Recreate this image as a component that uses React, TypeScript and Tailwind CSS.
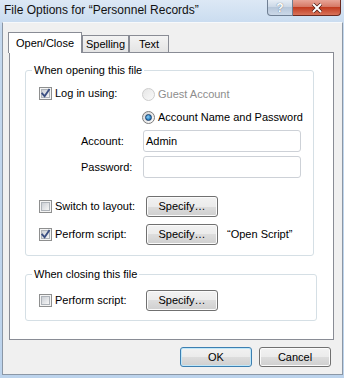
import React from "react";

const font = { fontFamily: '"Liberation Sans", Arial, sans-serif' };

function CheckBox({ checked }: { checked?: boolean }) {
  return (
    <span className="relative flex h-[13px] w-[13px] shrink-0 items-center justify-center border border-[#8e8f8f] bg-[#f4f4f4]">
      <span className="h-[9px] w-[9px] border border-[#aeb3b9] bg-[linear-gradient(135deg,#cbcfd5,#f6f6f6)]" />
      {checked && (
        <svg className="absolute left-0 top-0" width="11" height="11" viewBox="0 0 11 11">
          <path d="M2.3 5.6 L4.6 8.3 L9 1.8" fill="none" stroke="#3b4f82" strokeWidth="1.9" strokeLinecap="square" />
        </svg>
      )}
    </span>
  );
}

function Radio({ checked, disabled }: { checked?: boolean; disabled?: boolean }) {
  return (
    <span
      className={
        "flex h-[13px] w-[13px] shrink-0 items-center justify-center rounded-full border " +
        (disabled
          ? "border-[#cdcdcd] bg-[linear-gradient(135deg,#e6e6e6,#fafafa)]"
          : "border-[#7c7c7c] bg-[linear-gradient(135deg,#d6d6d6,#fdfdfd)]")
      }
    >
      {checked && (
        <span className="h-[7px] w-[7px] rounded-full border border-[#1b3f6b] bg-[radial-gradient(circle_at_40%_40%,#8fd0f5,#2c86c9_60%,#1c4f86)]" />
      )}
    </span>
  );
}

function Button({ children, w, def }: { children: React.ReactNode; w: string; def?: boolean }) {
  return (
    <div
      className={
        "flex h-[21px] items-center justify-center rounded-[3px] border bg-[linear-gradient(#f2f2f2_0%,#ebebeb_50%,#dddddd_50%,#cfcfcf_100%)] text-black " +
        (def ? "border-[#3c7fb1] shadow-[inset_0_0_0_1px_#bfe7f9]" : "border-[#707070] shadow-[inset_0_0_0_1px_#fbfbfb]") +
        " " +
        w
      }
    >
      {children}
    </div>
  );
}

function Tab({ label, active, w }: { label: string; active?: boolean; w: string }) {
  return (
    <div
      className={
        "flex items-center justify-center border border-b-0 border-[#898c95] " +
        (active
          ? "relative z-10 -mb-px h-[21px] bg-white"
          : "h-[17px] bg-[linear-gradient(#f3f3f3,#e4e4e4)]") +
        " " +
        w
      }
    >
      {label}
    </div>
  );
}

export default function App() {
  return (
    <div
      className="flex h-[378px] w-[344px] flex-col overflow-hidden bg-[linear-gradient(#dce8f5,#c4d8ee_30px,#bcd3ec)] text-[11px] text-black"
      style={font}
    >
      {/* title bar */}
      <div className="flex h-[22px] shrink-0 items-start">
        <span className="pl-[4px] pt-[3px] text-[12px] leading-[15px] text-[#111]">
          File Options for “Personnel Records”
        </span>
        <div className="ml-auto mr-[3px] flex">
          <div className="flex h-[16px] w-[26px] items-center justify-center rounded-bl-[4px] border border-t-0 border-[#6f7f93] bg-[linear-gradient(#e6edf5,#c9d6e5_50%,#b7c7da_50%,#cbd8e8)] text-[12px] font-bold leading-none text-white [text-shadow:0_0_1px_#3d4f66]">
            ?
          </div>
          <div className="flex h-[16px] w-[48px] items-center justify-center rounded-br-[4px] border border-l-0 border-t-0 border-[#6b2a20] bg-[linear-gradient(#e8a597,#d47460_50%,#c23c20_50%,#d8735a)]">
            <svg width="12" height="10" viewBox="0 0 12 10">
              <path d="M2 1 L10 9 M10 1 L2 9" stroke="#4a1a12" strokeWidth="3.4" />
              <path d="M2 1 L10 9 M10 1 L2 9" stroke="#fff" strokeWidth="2" />
            </svg>
          </div>
        </div>
      </div>

      {/* client area */}
      <div className="mb-[3px] ml-[2px] mr-[1px] flex flex-1 flex-col border border-[#8b97a6] border-t-[#f7f9fb] bg-[#f0f0f0] pl-[6px] pr-[8px] pt-[9px]">
        {/* tabs */}
        <div className="-ml-px flex h-[20px] items-end">
          <Tab label="Open/Close" active w="w-[74px]" />
          <Tab label="Spelling" w="w-[47px]" />
          <Tab label="Text" w="w-[40px]" />
        </div>

        {/* panel */}
        <div className="flex h-[288px] flex-col border border-[#898c95] bg-white pt-[10px]">
          <fieldset className="ml-[15px] w-[289px] rounded-[3px] border border-[#d5dfe5] px-0 pb-[10px] pt-0">
            <legend className="ml-[6px] px-[2px] leading-[14px]">When opening this file</legend>
            <div className="flex flex-col pt-[9px]">
              <div className="flex h-[14px] items-center pl-[13px]">
                <div className="flex w-[103px] items-center gap-[3px]">
                  <CheckBox checked />
                  <span>Log in using:</span>
                </div>
                <div className="flex items-center gap-[3px] pt-[2px] text-[#8d8d8d]">
                  <Radio disabled />
                  <span>Guest Account</span>
                </div>
              </div>
              <div className="mt-[10px] flex h-[14px] items-center gap-[3px] pl-[116px]">
                <Radio checked />
                <span>Account Name and Password</span>
              </div>
              <div className="mt-[6px] flex items-center pl-[55px]">
                <span className="w-[62px]">Account:</span>
                <div className="flex h-[22px] w-[158px] items-center rounded-[3px] border border-[#cdd1d7] bg-white px-[2px]">
                  Admin
                </div>
              </div>
              <div className="mt-[4px] flex items-center pl-[55px]">
                <span className="w-[62px]">Password:</span>
                <div className="h-[22px] w-[158px] rounded-[3px] border border-[#cdd1d7] bg-white" />
              </div>
              <div className="mt-[18px] flex items-center pl-[13px]">
                <div className="flex w-[107px] items-center gap-[3px]">
                  <CheckBox />
                  <span>Switch to layout:</span>
                </div>
                <Button w="w-[72px]">Specify…</Button>
              </div>
              <div className="mt-[7px] flex items-center pl-[13px]">
                <div className="flex w-[107px] items-center gap-[3px]">
                  <CheckBox checked />
                  <span>Perform script:</span>
                </div>
                <Button w="w-[72px]">Specify…</Button>
                <span className="ml-[9px]">“Open Script”</span>
              </div>
            </div>
          </fieldset>

          <fieldset className="ml-[15px] mt-[11px] w-[292px] rounded-[3px] border border-[#d5dfe5] px-0 pb-[9px] pt-0">
            <legend className="ml-[6px] px-[2px] leading-[14px]">When closing this file</legend>
            <div className="flex items-center pl-[13px] pt-[9px]">
              <div className="flex w-[107px] items-center gap-[3px]">
                <CheckBox />
                <span>Perform script:</span>
              </div>
              <Button w="w-[72px]">Specify…</Button>
            </div>
          </fieldset>
        </div>

        {/* dialog buttons */}
        <div className="mt-[7px] flex justify-end gap-[7px] pr-[3px]">
          <Button w="w-[72px] !h-[20px]" def>
            OK
          </Button>
          <Button w="w-[72px] !h-[20px]">Cancel</Button>
        </div>
      </div>
    </div>
  );
}
